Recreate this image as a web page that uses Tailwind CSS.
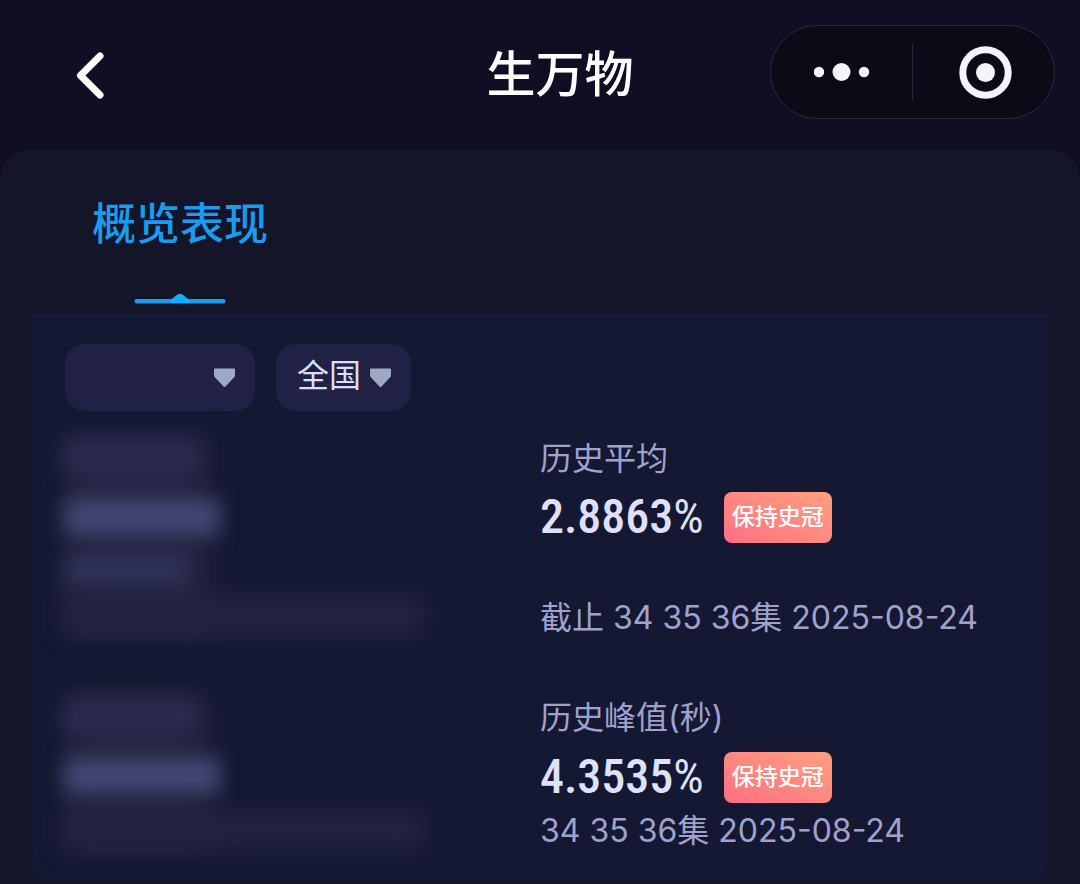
<!DOCTYPE html>
<html lang="zh-CN">
<head>
<meta charset="utf-8">
<meta name="viewport" content="width=device-width, initial-scale=1">
<title>生万物</title>
<script src="https://cdn.jsdelivr.net/npm/@tailwindcss/browser@4"></script>
</head>
<body class="min-h-screen bg-[#100e22] font-['Inter','Noto_Sans_CJK_SC',sans-serif] text-[#a0a2cc]">
<div class="flex min-h-screen flex-col">
  <header class="grid h-[149px] grid-cols-[1fr_auto_1fr] items-center gap-x-5">
    <button type="button" aria-label="返回" class="ml-[72px] flex h-16 w-9 items-center text-white">
      <svg class="h-[50px] w-9" viewBox="0 0 36 50" fill="none" stroke="currentColor" stroke-width="7" stroke-linecap="round" stroke-linejoin="round" aria-hidden="true"><path d="M28 6 8.500 25.500 28 45"/></svg>
    </button>
    <h1 class="pl-10 text-[49px] leading-[72px] font-medium text-white">生万物</h1>
    <div class="mr-[25px] mb-[6px] flex h-[94px] w-[285px] items-center justify-self-end rounded-full border border-[#2b2940] bg-[#0b0a16] text-[#f3f3fb]">
      <button type="button" aria-label="更多" class="flex h-full flex-1 items-center justify-center">
        <svg class="h-5 w-14" viewBox="0 0 56 20" fill="currentColor" aria-hidden="true"><circle cx="5" cy="10" r="5.200"/><circle cx="27.500" cy="10" r="9"/><circle cx="50" cy="10" r="5.200"/></svg>
      </button>
      <span class="h-14 w-px bg-[#2b2940]"></span>
      <button type="button" aria-label="关闭" class="flex h-full flex-1 items-center justify-center">
        <svg class="size-[58px]" viewBox="0 0 58 58" aria-hidden="true"><circle cx="30.500" cy="29.500" r="22.700" fill="none" stroke="currentColor" stroke-width="7"/><circle cx="30.500" cy="29.500" r="9.500" fill="currentColor"/></svg>
      </button>
    </div>
  </header>

  <main class="flex-1 rounded-t-[32px] bg-[#15152a] px-8 pb-1">
    <nav class="flex h-[164px] items-end">
      <a href="#overview" class="ml-[60px] flex flex-col items-center text-[44px] leading-[64px] font-medium text-[#1a9bf0]">
        概览表现
        <svg class="mt-9 mb-[9px] h-3 w-[92px]" viewBox="0 0 92 12" aria-hidden="true"><rect x="0.500" y="7" width="91" height="4.500" rx="2.200" fill="#1a9bf0"/><path d="M36 8.500 43.500 2.500Q46 .800 48.500 2.500L56 8.500V11H36Z" fill="#12adff"/></svg>
      </a>
    </nav>

    <section id="overview" class="rounded-b-[20px] bg-[#151832] px-[33px] pt-[31px] pb-[25px]">
      <form class="flex gap-[21px] text-[32px] text-[#dcdef8]">
        <div class="relative h-[67px] w-[190px]">
          <select aria-label="时间" class="size-full appearance-none rounded-[20px] bg-[#202145] pl-[21px]"><option></option></select>
          <svg class="pointer-events-none absolute top-6 right-5 h-5 w-[21px]" viewBox="0 0 21 20" fill="#a0a9c3" aria-hidden="true"><path d="M1 .500H20Q21 .500 21 1.500V7.500Q21 8.500 20 9.500L11.500 18.500Q10.500 19.500 9.500 18.500L1 9.500Q0 8.500 0 7.500V1.500Q0 .500 1 .500Z"/></svg>
        </div>
        <div class="relative h-[67px] w-[135px]">
          <select aria-label="地区" class="size-full appearance-none rounded-[20px] bg-[#202145] pb-1 pl-[21px]"><option>全国</option></select>
          <svg class="pointer-events-none absolute top-6 right-5 h-5 w-[21px]" viewBox="0 0 21 20" fill="#a0a9c3" aria-hidden="true"><path d="M1 .500H20Q21 .500 21 1.500V7.500Q21 8.500 20 9.500L11.500 18.500Q10.500 19.500 9.500 18.500L1 9.500Q0 8.500 0 7.500V1.500Q0 .500 1 .500Z"/></svg>
        </div>
      </form>

      <div class="mt-6 grid grid-cols-2 text-[32px] leading-[48px]">
        <div class="relative isolate flex h-[207px] flex-col" aria-hidden="true">
          <div class="absolute top-0 left-0 -z-10 h-[200px] w-[146px] bg-[#232340] blur-[12px]"></div>
          <div class="mt-1 h-9 w-[132px] bg-[#2b2b50] blur-[10px]"></div>
          <div class="mt-6 h-9 w-[155px] bg-[#424873] blur-[10px]"></div>
          <div class="mt-5 h-8 w-[124px] bg-[#303258] blur-[10px]"></div>
          <div class="mt-2 h-10 w-[360px] bg-[#242443] blur-[12px]"></div>
        </div>
        <div>
          <h2>历史平均</h2>
          <div class="mt-2 flex h-[52px] items-center gap-5">
            <strong class="font-['Roboto_Condensed',sans-serif] text-[48px] font-medium text-[#dfe0fa]">2.8863<span class="font-normal">%</span></strong>
            <span class="rounded-lg bg-linear-to-tr from-[#ff6f82] to-[#ffa07f] px-2 text-[23px] leading-[51px] font-medium text-white">保持史冠</span>
          </div>
          <p class="mt-[51px] whitespace-nowrap">截止 34 35 36集 2025-08-24</p>
        </div>
      </div>

      <div class="mt-[52px] grid grid-cols-2 text-[32px] leading-[48px]">
        <div class="relative isolate flex h-[161px] flex-col" aria-hidden="true">
          <div class="absolute top-0 left-0 -z-10 h-[155px] w-[146px] bg-[#232340] blur-[12px]"></div>
          <div class="mt-1 h-9 w-[130px] bg-[#2b2b50] blur-[10px]"></div>
          <div class="mt-6 h-9 w-[155px] bg-[#424873] blur-[10px]"></div>
          <div class="mt-4 h-10 w-[360px] bg-[#232342] blur-[12px]"></div>
        </div>
        <div>
          <h2>历史峰值(秒)</h2>
          <div class="mt-[9px] flex h-[52px] items-center gap-5">
            <strong class="font-['Roboto_Condensed',sans-serif] text-[48px] font-medium text-[#dfe0fa]">4.3535<span class="font-normal">%</span></strong>
            <span class="rounded-lg bg-linear-to-tr from-[#ff6f82] to-[#ffa07f] px-2 text-[23px] leading-[51px] font-medium text-white">保持史冠</span>
          </div>
          <p class="mt-1 whitespace-nowrap">34 35 36集 2025-08-24</p>
        </div>
      </div>
    </section>
  </main>
</div>
</body>
</html>
